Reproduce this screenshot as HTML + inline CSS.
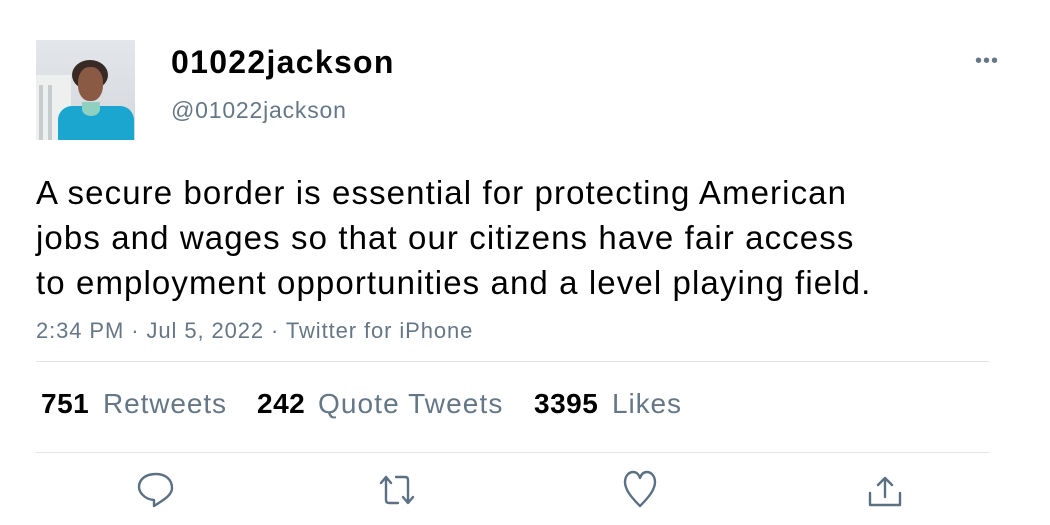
<!DOCTYPE html>
<html><head><meta charset="utf-8"><style>
body{margin:0;width:1050px;height:525px;background:#fff;font-family:"Liberation Sans",Arial,sans-serif;position:relative;overflow:hidden;color:#000}
.a{position:absolute;white-space:nowrap}
.g{color:#657786}
</style></head><body>
<div class="a" style="left:36px;top:40px;width:99px;height:100px;background:linear-gradient(#e3e6ea,#d3d8de);overflow:hidden">
 <div class="a" style="left:0;top:35px;width:35px;height:65px;background:#eef0f0"></div>
 <div class="a" style="left:3px;top:45px;width:4px;height:55px;background:#c9ccce"></div>
 <div class="a" style="left:12px;top:45px;width:4px;height:55px;background:#c9ccce"></div>
 <div class="a" style="left:36px;top:20px;width:36px;height:30px;border-radius:50%;background:#3a2a25"></div>
 <div class="a" style="left:42px;top:27px;width:25px;height:34px;border-radius:45%;background:#8a5a44"></div>
 <div class="a" style="left:22px;top:66px;width:76px;height:50px;border-radius:14px 14px 0 0;background:#1aa6cf"></div>
 <div class="a" style="left:46px;top:62px;width:18px;height:14px;border-radius:0 0 50% 50%;background:#8fd0c0"></div>
</div>
<div class="a" style="left:171px;top:44px;font-size:32px;font-weight:bold;letter-spacing:1.3px">01022jackson</div>
<div class="a g" style="left:171px;top:97px;font-size:23px;letter-spacing:0.8px">@01022jackson</div>
<div class="a" style="left:975px;top:50px;font-size:20px;color:#657786;letter-spacing:1px">•••</div>
<div class="a" style="left:36px;top:170px;font-size:33px;line-height:45px;letter-spacing:1.1px">A secure border is essential for protecting American<br>jobs and wages so that our citizens have fair access<br>to employment opportunities and a level playing field.</div>
<div class="a g" style="left:36px;top:318px;font-size:22px;letter-spacing:0.9px">2:34 PM · Jul 5, 2022 · Twitter for iPhone</div>
<div class="a" style="left:36px;top:361px;width:953px;height:1px;background:#dfe3e6"></div>
<div class="a" style="left:41px;top:388px;font-size:28px;font-weight:bold;letter-spacing:0.5px">751</div>
<div class="a g" style="left:103px;top:388px;font-size:28px;letter-spacing:0.9px">Retweets</div>
<div class="a" style="left:257px;top:388px;font-size:28px;font-weight:bold;letter-spacing:0.5px">242</div>
<div class="a g" style="left:318px;top:388px;font-size:28px;letter-spacing:1.1px">Quote Tweets</div>
<div class="a" style="left:534px;top:388px;font-size:28px;font-weight:bold;letter-spacing:0.5px">3395</div>
<div class="a g" style="left:612px;top:388px;font-size:28px;letter-spacing:0.9px">Likes</div>
<div class="a" style="left:36px;top:452px;width:953px;height:1px;background:#dfe3e6"></div>
<svg class="a" style="left:0;top:0" width="1050" height="525" fill="none" stroke="#5b7083" stroke-width="2.4" stroke-linecap="round" stroke-linejoin="round">
 <path d="M154 506 L154 500 C143 499 139 491 139 487 C139 479 146 474 156 474 C166 474 172 480 172 488 C172 494 167 498 154 506Z"/>
 <path d="M381 483 L386 477 L391 483 M386 477 L386 500 Q386 503 389 503 L398 503 M396 477 L405 477 Q408 477 408 480 L408 503 M403 497 L408 503 L413 497"/>
 <path d="M640 506 C632 498 625 490 625 482 C625 476 629 472 633 472 C637 472 639 475 640 478 C641 475 643 472 647 472 C651 472 655 476 655 482 C655 490 648 498 640 506Z"/>
 <path d="M870 493 L870 505 L900 505 L900 493 M885 497 L885 478 M878 485 L885 478 L892 485"/>
</svg>
</body></html>
